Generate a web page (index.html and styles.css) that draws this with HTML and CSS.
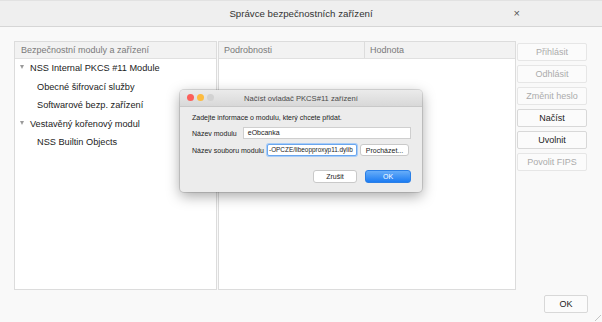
FILE: index.html
```html
<!DOCTYPE html>
<html lang="cs">
<head>
    <meta charset="UTF-8">
    <meta name="viewport" content="width=device-width, initial-scale=1.0">
    <title>Správce bezpečnostních zařízení</title>
    <link rel="stylesheet" href="styles.css">
</head>
<body>
    <div class="window">
        <div class="titlebar">
            <span class="title">Správce bezpečnostních zařízení</span>
            <span class="close">×</span>
        </div>

        <div class="main">
            <div class="panel tree">
                <div class="head">Bezpečnostní moduly a zařízení</div>
                <ul class="rows">
                    <li class="parent"><span class="twisty"></span>NSS Internal PKCS #11 Module</li>
                    <li class="child">Obecné šifrovací služby</li>
                    <li class="child">Softwarové bezp. zařízení</li>
                    <li class="parent"><span class="twisty"></span>Vestavěný kořenový modul</li>
                    <li class="child">NSS Builtin Objects</li>
                </ul>
            </div>

            <div class="panel details">
                <div class="head cols">
                    <span class="col-name">Podrobnosti</span>
                    <span class="col-value">Hodnota</span>
                </div>
            </div>

            <div class="actions">
                <button class="btn" disabled>Přihlásit</button>
                <button class="btn" disabled>Odhlásit</button>
                <button class="btn" disabled>Změnit heslo</button>
                <button class="btn">Načíst</button>
                <button class="btn">Uvolnit</button>
                <button class="btn" disabled>Povolit FIPS</button>
            </div>
        </div>

        <div class="footer">
            <button class="btn ok">OK</button>
        </div>
        <span class="grip"></span>
    </div>

    <!-- modal sheet on top of the manager -->
    <div class="dialog">
        <div class="dlg-title">
            <span class="lights">
                <span class="light red"></span>
                <span class="light yellow"></span>
                <span class="light gray"></span>
            </span>
            <span class="dlg-caption">Načíst ovladač PKCS#11 zařízení</span>
        </div>
        <div class="dlg-body">
            <p class="intro">Zadejte informace o modulu, který chcete přidat.</p>
            <div class="field">
                <label class="label">Název modulu</label>
                <span class="input wide">eObcanka</span>
            </div>
            <div class="field">
                <label class="label">Název souboru modulu</label>
                <span class="input focus">-OPCZE/libeopproxyp11.dylib</span>
                <button class="mac-btn browse">Procházet...</button>
            </div>
            <div class="dlg-buttons">
                <button class="mac-btn cancel">Zrušit</button>
                <button class="mac-btn default">OK</button>
            </div>
        </div>
    </div>
</body>
</html>
```

FILE: styles.css
```css
body {
    margin: 0;
    width: 602px;
    height: 322px;
    overflow: hidden;
    background: #f9f9f9;
    font-family: 'Liberation Sans', Arial, sans-serif;
    color: #222;
    position: relative;
}

.window {
    height: 322px;
    display: flex;
    flex-direction: column;
}

/* Title bar */
.titlebar {
    height: 25px;
    flex: none;
    display: flex;
    align-items: center;
    justify-content: center;
    background: #efefef;
    border-top: 1px solid #e2e2e2;
    border-bottom: 1px solid #d6d6d6;
    position: relative;
}

.title {
    font-size: 9.7px;
    color: #333;
}

.close {
    position: absolute;
    right: 82px;
    top: 6px;
    font-size: 11px;
    color: #555;
}

/* Main area */
.main {
    display: flex;
    height: 249px;
    margin: 14px 15px 0 14px;
}

.panel {
    background: #fff;
    border: 1px solid #dcdcdc;
    display: flex;
    flex-direction: column;
}

.tree {
    width: 201px;
}

.details {
    width: 296px;
    margin-left: 1px;
}

.head {
    height: 16px;
    background: #f2f2f2;
    border-bottom: 1px solid #e0e0e0;
    font-size: 9px;
    color: #7a7a7a;
    line-height: 16px;
    padding-left: 6px;
}

.cols {
    display: flex;
    padding-left: 0;
}

.col-name {
    width: 140px;
    padding-left: 5px;
    border-right: 1px solid #dcdcdc;
}

.col-value {
    padding-left: 5px;
}

.rows {
    list-style: none;
    margin: 0;
    padding: 0;
    font-size: 9.2px;
}

.rows li {
    height: 18.5px;
    line-height: 18.5px;
    color: #222;
}

.parent {
    padding-left: 5px;
}

.twisty {
    display: inline-block;
    width: 0;
    height: 0;
    border-left: 2.5px solid transparent;
    border-right: 2.5px solid transparent;
    border-top: 4px solid #9a9a9a;
    margin-right: 6px;
    vertical-align: 2px;
}

.child {
    padding-left: 22px;
}

/* Buttons on the right */
.actions {
    display: flex;
    flex-direction: column;
    gap: 4px;
    margin-left: 1px;
    padding-top: 2px;
}

.btn {
    width: 70px;
    height: 18px;
    padding: 0;
    background: #fbfbfb;
    border: 1px solid #d8d8d8;
    border-radius: 2px;
    font-family: inherit;
    font-size: 9px;
    color: #222;
}

.btn:disabled {
    color: #ababab;
    border-color: #e6e6e6;
}

.footer {
    display: flex;
    justify-content: flex-end;
    padding: 5px 14px 0 0;
}

.ok {
    width: 44px;
    height: 18px;
}

.grip {
    position: absolute;
    right: 1px;
    bottom: 1px;
    width: 6px;
    height: 6px;
    background: linear-gradient(135deg, transparent 45%, #c4c4c4 45%, #c4c4c4 55%, transparent 55%);
}

/* Modal dialog */
.dialog {
    position: absolute;
    left: 180px;
    top: 90px;
    width: 242px;
    height: 102px;
    background: #ececec;
    border-radius: 4px;
    box-shadow: 0 4px 14px rgba(0, 0, 0, 0.35), 0 0 0 1px rgba(0, 0, 0, 0.12);
    overflow: hidden;
    font-size: 7px;
    color: #222;
}

.dlg-title {
    height: 16px;
    background: linear-gradient(#ebebeb, #d8d8d8);
    border-bottom: 1px solid #c8c8c8;
    display: flex;
    align-items: center;
    justify-content: center;
    position: relative;
}

.lights {
    position: absolute;
    left: 7px;
    top: 4px;
    display: flex;
    gap: 3px;
}

.light {
    width: 7px;
    height: 7px;
    border-radius: 50%;
}

.red { background: #fc605b; }
.yellow { background: #fdbc40; }
.gray { background: #d2d2d2; }

.dlg-caption {
    font-size: 7.6px;
    color: #4a4a4a;
}

.dlg-body {
    padding: 6px 11px 0 12px;
}

.intro {
    margin: 0;
    line-height: 9px;
}

.field {
    display: flex;
    align-items: center;
    margin-top: 5px;
    height: 12px;
}

.label {
    margin-right: 3px;
}

.input {
    height: 10px;
    line-height: 10px;
    background: #fff;
    border: 1px solid #cfcfcf;
    padding: 0 4px;
    overflow: hidden;
    white-space: nowrap;
}

.wide {
    flex: 1;
    margin-left: 3px;
}

.focus {
    width: 86px;
    padding: 0 1px;
    font-size: 6.4px;
    border-color: #6aa6ee;
    box-shadow: 0 0 0 1px #a9cdf7;
    border-radius: 2px;
}

.mac-btn {
    font-family: inherit;
    font-size: 7px;
    height: 12px;
    padding: 0;
    background: #fff;
    border: 1px solid #c9c9c9;
    border-radius: 3px;
    color: #222;
}

.browse {
    width: 49px;
    margin-left: 3px;
}

.dlg-buttons {
    display: flex;
    justify-content: flex-end;
    gap: 8px;
    margin-top: 14px;
}

.cancel {
    width: 44px;
    height: 13px;
}

.default {
    width: 46px;
    height: 13px;
    background: linear-gradient(#67adf9, #1c7cf2);
    border-color: #2a7fe6;
    color: #fff;
}
```
